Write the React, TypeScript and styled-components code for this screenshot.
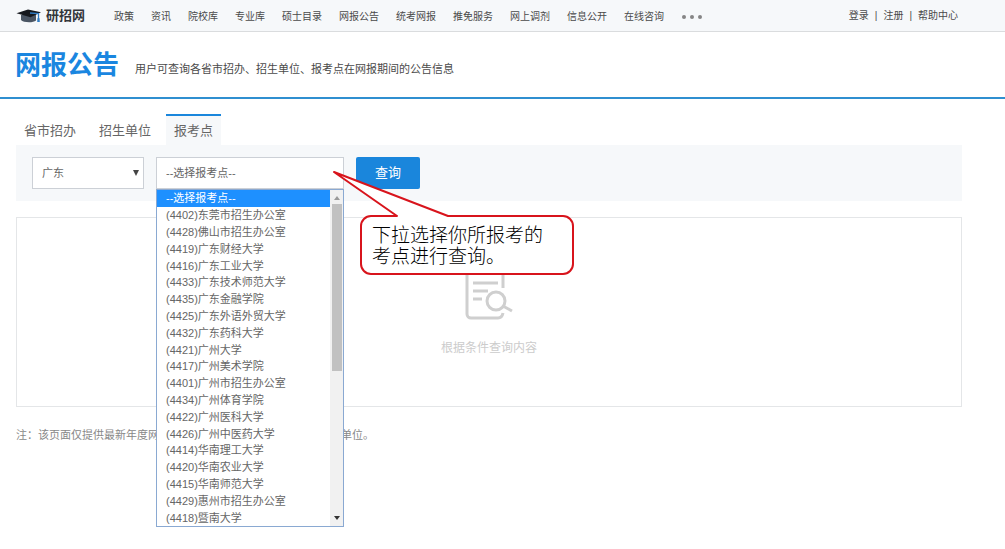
import React from 'react';
import styled, { createGlobalStyle } from 'styled-components';

const GlobalStyle = createGlobalStyle`
  *, *::before, *::after { box-sizing: border-box; }
  body {
    margin: 0;
    background: #fff;
    color: #4a4a4a;
    font-family: "Liberation Sans", "Noto Sans CJK SC", sans-serif;
    font-size: 11px;
    line-height: 16px;
  }
  ul { list-style: none; margin: 0; padding: 0; }
  a { color: inherit; text-decoration: none; }
`;

const Page = styled.div`
  min-height: 100vh;
`;

const Header = styled.header`
  display: flex;
  align-items: center;
  height: 32px;
  padding: 0 47px 0 16px;
  background: #f6f8fa;
  border-bottom: 1px solid #dadcde;
  font-size: 10px;
  white-space: nowrap;
`;

const Logo = styled.a`
  display: flex;
  align-items: center;
  gap: 4px;
  margin-right: 29px;
  color: #33363b;
  font-family: "Liberation Serif", "Noto Sans CJK SC", serif;
  font-size: 13px;
  font-weight: 700;
`;

const Nav = styled.nav`
  flex: 1;
  display: flex;
  align-items: center;
  gap: 17px;
  padding-top: 2px;
`;

const MoreButton = styled.button`
  display: flex;
  padding: 0;
  border: 0;
  background: none;
`;

const Account = styled.div`
  display: flex;
  gap: 6px;
`;

const TitleBar = styled.section`
  display: flex;
  align-items: center;
  gap: 16px;
  height: 67px;
  padding: 0 15px;
  border-bottom: 2px solid #2f8fd0;
`;

const Title = styled.h1`
  margin: 0;
  color: #1a86e0;
  font-size: 26px;
  line-height: 32px;
  font-weight: 700;
`;

const Subtitle = styled.p`
  margin: 0;
  padding-top: 8px;
`;

const Main = styled.main`
  padding: 15px 43px 104px 16px;
`;

const Tabs = styled.div`
  display: flex;
  gap: 7px;
`;

const Tab = styled.button<{ $active?: boolean }>`
  height: 31px;
  padding: 0 8px;
  border: 0;
  border-top: 2px solid ${p => (p.$active ? '#1a86dc' : 'transparent')};
  background: ${p => (p.$active ? '#f6f8fa' : 'transparent')};
  color: #666;
  font: inherit;
  font-size: 13px;
`;

const Filters = styled.form`
  position: relative;
  display: flex;
  gap: 12px;
  padding: 12px 16px;
  background: #f6f8fa;
`;

const Field = styled.div<{ $width: number }>`
  position: relative;
  width: ${p => p.$width}px;
`;

const Select = styled.select`
  display: block;
  appearance: none;
  width: 100%;
  height: 32px;
  padding: 0 9px;
  border: 1px solid #ccd0d6;
  border-radius: 0;
  background: #fff;
  color: #666;
  font: inherit;
`;

const Arrow = styled.svg`
  position: absolute;
  right: 5px;
  top: 13px;
  pointer-events: none;
`;

const Dropdown = styled.div`
  position: absolute;
  z-index: 1;
  top: 100%;
  left: 0;
  right: 0;
  display: flex;
  height: 338px;
  border: 1px solid #8aa9d2;
  background: #fff;
`;

const Options = styled.ul`
  flex: 1;
  display: grid;
  grid-auto-rows: 1fr;
`;

const Option = styled.li<{ $selected: boolean }>`
  display: flex;
  align-items: center;
  min-height: 0;
  padding-left: 9px;
  background: ${p => (p.$selected ? '#1e90ff' : 'transparent')};
  color: ${p => (p.$selected ? '#fff' : '#666')};
`;

const Scrollbar = styled.div`
  display: flex;
  flex-direction: column;
  align-items: center;
  justify-content: space-between;
  width: 13px;
  padding: 6px 1px;
  background: #f1f1f1;
`;

const Thumb = styled.div`
  width: 10px;
  height: 167px;
  margin: 4px 0 auto;
  background: #c1c1c1;
`;

const QueryButton = styled.button`
  width: 64px;
  height: 32px;
  padding: 0;
  border: 0;
  border-radius: 2px;
  background: #1a86dc;
  color: #fff;
  font: inherit;
  font-size: 13px;
`;

const Callout = styled.div`
  position: absolute;
  z-index: 2;
  left: 317px;
  top: 25px;
  width: 242px;
  padding: 55px 0 8px 39px;
  color: #000;
  font-size: 19px;
  line-height: 21px;
  font-weight: 300;
  white-space: nowrap;
`;

const CalloutShape = styled.svg`
  position: absolute;
  z-index: -1;
  left: 0;
  top: 0;
`;

const Results = styled.section`
  display: flex;
  flex-direction: column;
  align-items: center;
  gap: 19px;
  min-height: 190px;
  margin-top: 16px;
  padding-top: 49px;
  border: 1px solid #e4e6e8;
  color: #ccc;
  font-size: 12px;
`;

const Message = styled.p`
  margin: 0;
`;

const Note = styled.p`
  margin: 20px 0 0;
  color: #888;
`;

const navItems = [
  '政策', '资讯', '院校库', '专业库', '硕士目录', '网报公告',
  '统考网报', '推免服务', '网上调剂', '信息公开', '在线咨询',
];

const sites = [
  '--选择报考点--',
  '(4402)东莞市招生办公室',
  '(4428)佛山市招生办公室',
  '(4419)广东财经大学',
  '(4416)广东工业大学',
  '(4433)广东技术师范大学',
  '(4435)广东金融学院',
  '(4425)广东外语外贸大学',
  '(4432)广东药科大学',
  '(4421)广州大学',
  '(4417)广州美术学院',
  '(4401)广州市招生办公室',
  '(4434)广州体育学院',
  '(4422)广州医科大学',
  '(4426)广州中医药大学',
  '(4414)华南理工大学',
  '(4420)华南农业大学',
  '(4415)华南师范大学',
  '(4429)惠州市招生办公室',
  '(4418)暨南大学',
];

const CapIcon = () => (
  <svg width="26" height="14" viewBox="0 0 26 14" aria-hidden="true">
    <path d="M5 6v5c2 2.600 12 3.200 15 .5V5z" fill="#4a5563" />
    <path d="M.5 4.200 12 .6l13 2.600-10.500 5z" fill="#15181d" />
    <path d="M14 4l8.500.6V12" fill="none" stroke="#2f7cc4" strokeWidth="1.300" />
    <path d="M21.600 9h1.800l.4 4h-2.600z" fill="#2f7cc4" />
  </svg>
);

const EmptyIcon = () => (
  <svg width="50" height="54" viewBox="0 0 50 54" fill="none" stroke="#cfcfcf" strokeWidth="3" aria-hidden="true">
    <path d="M39 21V6a4 4 0 0 0-4-4H7a4 4 0 0 0-4 4v41a4 4 0 0 0 4 4h27q4 0 5-5" />
    <path d="M9 16h25M9 24h15M9 32h9" />
    <circle cx="32" cy="34" r="9" />
    <path d="M39 39l9 5" />
  </svg>
);

export default function App() {
  return (
    <Page>
      <GlobalStyle />
      <Header>
        <Logo href="#"><CapIcon />研招网</Logo>
        <Nav>
          {navItems.map(item => <a key={item} href="#">{item}</a>)}
          <MoreButton type="button" aria-label="更多">
            <svg width="22" height="4" viewBox="0 0 22 4" fill="#858585">
              <circle cx="3" cy="2" r="2" />
              <circle cx="11" cy="2" r="2" />
              <circle cx="19" cy="2" r="2" />
            </svg>
          </MoreButton>
        </Nav>
        <Account>
          <a href="#">登录</a>
          <span>|</span>
          <a href="#">注册</a>
          <span>|</span>
          <a href="#">帮助中心</a>
        </Account>
      </Header>
      <TitleBar>
        <Title>网报公告</Title>
        <Subtitle>用户可查询各省市招办、招生单位、报考点在网报期间的公告信息</Subtitle>
      </TitleBar>
      <Main>
        <Tabs role="tablist">
          <Tab type="button" role="tab">省市招办</Tab>
          <Tab type="button" role="tab">招生单位</Tab>
          <Tab type="button" role="tab" aria-selected $active>报考点</Tab>
        </Tabs>
        <Filters onSubmit={e => e.preventDefault()}>
          <Field $width={112}>
            <Select aria-label="省份" defaultValue="广东">
              <option>广东</option>
            </Select>
            <Arrow width="6" height="6" viewBox="0 0 6 6"><path d="M0 0h6L3 6z" fill="#444" /></Arrow>
          </Field>
          <Field $width={188}>
            <Select aria-label="报考点" defaultValue={sites[0]}>
              {sites.map(site => <option key={site}>{site}</option>)}
            </Select>
            <Dropdown>
              <Options role="listbox" aria-label="报考点列表">
                {sites.map((site, i) => (
                  <Option key={site} role="option" aria-selected={i === 0} $selected={i === 0}>{site}</Option>
                ))}
              </Options>
              <Scrollbar aria-hidden="true">
                <svg width="6" height="4" viewBox="0 0 6 4"><path d="M0 4h6L3 0z" fill="#9a9a9a" /></svg>
                <Thumb />
                <svg width="6" height="4" viewBox="0 0 6 4"><path d="M0 0h6L3 4z" fill="#333" /></svg>
              </Scrollbar>
            </Dropdown>
          </Field>
          <QueryButton type="submit">查询</QueryButton>
          <Callout role="note">
            <CalloutShape width="242" height="106" viewBox="0 0 242 106" aria-hidden="true">
              <path
                d="M1 2 64 46H38a10 10 0 0 0-10 10v38a10 10 0 0 0 10 10h192a10 10 0 0 0 10-10V56a10 10 0 0 0-10-10H115z"
                fill="#fff" stroke="#d8141c" strokeWidth="2" strokeLinejoin="round"
              />
            </CalloutShape>
            下拉选择你所报考的<br />考点进行查询。
          </Callout>
        </Filters>
        <Results>
          <EmptyIcon />
          <Message>根据条件查询内容</Message>
        </Results>
        <Note>注：该页面仅提供最新年度网报公告, 往年的公告请查询各相关招生单位。</Note>
      </Main>
    </Page>
  );
}
